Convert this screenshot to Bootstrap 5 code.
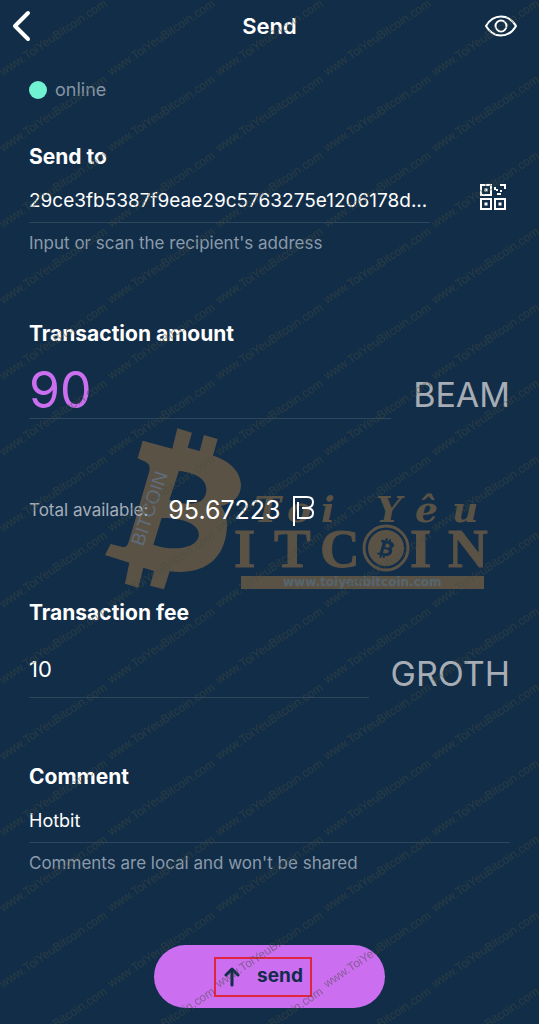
<!DOCTYPE html>
<html lang="en">
<head>
<meta charset="utf-8">
<meta name="viewport" content="width=device-width, initial-scale=1">
<title>Send</title>
<link href="https://cdn.jsdelivr.net/npm/bootstrap@5.3.0/dist/css/bootstrap.min.css" rel="stylesheet">
<style>
  body { background: #122d48; color: #fff; font-family: Inter, "Liberation Sans", sans-serif; }
  .screen { overflow: hidden; }
  .topbar { height: 52px; padding: 0 12px; grid-template-columns: 1fr auto 1fr; }
  .topbar h1 { font-size: 22px; line-height: 28px; font-weight: 600; }
  .icon-btn { background: none; border: 0; padding: 0; color: #fff; line-height: 0; }
  .eye-btn { justify-self: end; margin-right: 8px; }
  .content { padding: 26px 29px 15px; }
  .status { font-size: 18px; line-height: 24px; color: #8595a4; gap: 8px; margin-bottom: 41px; }
  .dot { width: 18px; height: 18px; background: #70f3d3; }
  .block { margin-bottom: 65px; }
  .title-label { display: block; font-size: 21px; line-height: 28px; font-weight: 700; }
  .field { background: none; border: 0; border-bottom: 1px solid #2d465b; border-radius: 0; color: #fff; padding: 0; min-width: 0; outline: 0; text-overflow: ellipsis; }
  .field-line { height: 44px; font-size: 18px; margin-top: 8px; }
  .field-address { font-size: 19px; }
  .field-tall { height: 57px; font-size: 22px; margin-top: 14px; }
  .field-amount { font-size: 50px; color: #cb6ff0; }
  .hint { font-size: 17px; line-height: 24px; color: #8b9bab; margin-top: 8px; }
  .unit { font-size: 34px; line-height: 40px; color: #a8adb5; padding-bottom: 4px; }
  .unit-row { gap: 22px; }
  .address-row { gap: 50px; padding-right: 4px; }
  .available { padding: 75px 0 73px; }
  .available-row { gap: 20px; line-height: 32px; }
  .available-label { font-size: 17px; color: #a5aeb8; }
  .available-value { font-size: 25px; gap: 11px; }
  .brand { left: 78px; top: 9px; width: 380px; overflow: visible; }
  .send-btn { width: 231px; height: 63px; background: #cb6ef0; color: #112c4c; border: 0; border-radius: 32px; }
  .send-frame { width: 98px; height: 40px; margin-right: 13px; border: 2px solid #e0263f; font-size: 19px; font-weight: 700; gap: 16px; }
  .tiled { inset: 0; pointer-events: none; z-index: 5; }
</style>
</head>
<body>
<div class="screen position-relative min-vh-100 d-flex flex-column">
  <header class="topbar d-grid align-items-center">
    <button type="button" class="icon-btn text-start" aria-label="Back">
      <svg width="22" height="34" viewBox="0 0 22 34" fill="none" stroke="currentColor" stroke-width="4" stroke-linecap="round" stroke-linejoin="round"><path d="M16 4 3 17l13 13"/></svg>
    </button>
    <h1 class="m-0">Send</h1>
    <button type="button" class="icon-btn eye-btn" aria-label="Hide amounts">
      <svg width="36" height="24" viewBox="0 0 36 24" fill="none" stroke="currentColor" stroke-width="2" stroke-linejoin="round"><path d="M3 12C7 5 12 2.500 18 2.500S29 5 33 12C29 19 24 21.500 18 21.500S7 19 3 12Z"/><circle cx="18" cy="12" r="5.500"/></svg>
    </button>
  </header>

  <main class="content flex-grow-1">
    <div class="status d-flex align-items-center"><span class="dot rounded-circle"></span>online</div>

    <section class="block">
      <label class="title-label" for="address">Send to</label>
      <div class="address-row d-flex align-items-center">
        <input id="address" class="field field-line field-address flex-grow-1" type="text" value="29ce3fb5387f9eae29c5763275e1206178d...">
        <button type="button" class="icon-btn" aria-label="Scan QR code">
          <svg width="26" height="26" viewBox="0 0 26 26"><g fill="none" stroke="#fff" stroke-width="2"><path d="M1 1h10v10H1zM1 15h10v10H1zM15 15h10v10H15z"/><path d="M20 1h5v4"/></g><path fill="#fff" d="M4.500 4.500h3v3h-3zM4.500 18.500h3v3h-3zM18.500 18.500h3v3h-3zM14 3h2v3h-2zM16 5h2v2h-2zM17 9h4v2h-4zM20 6h2v2h-2z"/></svg>
        </button>
      </div>
      <div class="hint">Input or scan the recipient's address</div>
    </section>

    <section>
      <label class="title-label" for="amount">Transaction amount</label>
      <div class="unit-row d-flex align-items-end">
        <input id="amount" class="field field-tall field-amount flex-grow-1" type="text" value="90">
        <span class="unit">BEAM</span>
      </div>
    </section>

    <section class="available position-relative">
      <svg class="brand position-absolute" height="162" viewBox="107 428 380 162" aria-hidden="true">
        <defs>
          <path id="coin-b" fill-rule="evenodd" d="M262 25 306 38 293 83 329 93 342 45 383 57 369 107C412 119 451 150 453 194C454 229 428 251 393 258C415 286 415 331 402 370C385 425 331 466 239 454L222 508 180 497 192 453 160 443 145 503 105 491 118 428 45 405 62 372 98 381C108 382 112 378 116 366L178 154C181 140 178 130 166 125L143 115 158 62 247 86ZM267 153 238 239C279 256 345 262 349 214C353 176 314 158 267 153ZM215 294 190 374C238 392 316 390 326 350C333 310 272 293 215 294Z"/>
        </defs>
        <g fill="#5b5246">
          <use href="#coin-b" transform="translate(90 420) scale(.3333)"/>
          <g font-family="Liberation Serif" font-weight="700" font-size="55" stroke="#5b5246"><text x="234" y="567">I</text><text x="274" y="567">T</text><text x="320" y="567">C</text><text x="410" y="567">I</text><text x="448" y="567">N</text></g>
          <g font-family="DejaVu Serif" font-weight="700" font-style="italic" font-size="36"><text x="254" y="522">T</text><text x="287" y="522">o</text><text x="321" y="522">i</text><text x="376" y="522">Y</text><text x="415" y="522">ê</text><text x="452" y="522">u</text></g>
          <path d="M241 576h243v13H241z"/>
          <circle cx="386" cy="548" r="18"/>
        </g>
        <circle cx="386" cy="548" r="22" fill="none" stroke="#5b5246" stroke-width="3"/>
        <use href="#coin-b" fill="#15304a" transform="translate(375 537) scale(.042)"/>
        <text transform="translate(143 547) rotate(-71)" font-family="Liberation Sans" font-size="19" fill="#5f6c7b">BITCOIN</text>
        <text x="283" y="586" font-family="DejaVu Sans" font-weight="700" font-size="12" fill="#56666f">www.toiyeubitcoin.com</text>
      </svg>
      <div class="available-row d-flex align-items-center position-relative">
        <span class="available-label">Total available:</span>
        <span class="available-value d-flex align-items-center">95.67223
          <svg width="23" height="32" viewBox="0 0 23 32" fill="none" stroke="#fff" stroke-width="2"><path d="M2 32V3H15C19 3 21 5 21 8C21 12 18 14 14 14H10M14 14C19 14 21 16 21 19C21 22 19 24 15 24H6V8"/></svg>
        </span>
      </div>
    </section>

    <section class="block">
      <label class="title-label" for="fee">Transaction fee</label>
      <div class="unit-row d-flex align-items-end">
        <input id="fee" class="field field-tall flex-grow-1" type="text" value="10">
        <span class="unit">GROTH</span>
      </div>
    </section>

    <section>
      <label class="title-label" for="comment">Comment</label>
      <input id="comment" class="field field-line w-100" type="text" value="Hotbit">
      <div class="hint">Comments are local and won't be shared</div>
    </section>
  </main>

  <footer class="d-flex justify-content-center pb-3">
    <button type="button" class="send-btn d-flex align-items-center justify-content-center p-0">
      <span class="send-frame d-flex align-items-center justify-content-center">
        <svg width="18" height="20" viewBox="0 0 18 20" fill="none" stroke="currentColor" stroke-width="3" stroke-linecap="round" stroke-linejoin="round"><path d="M9 18V3M3 8l6-6 6 6"/></svg>
        send
      </span>
    </button>
  </footer>

  <svg class="tiled position-absolute w-100 h-100" aria-hidden="true">
    <defs>
      <pattern id="tile" width="108" height="76" patternUnits="userSpaceOnUse">
        <g font-family="Liberation Sans" font-size="12" fill="#40493c" fill-opacity=".5">
          <text transform="translate(3 76) rotate(-34)">www.ToiYeuBitcoin.com</text>
          <text transform="translate(3 152) rotate(-34)">www.ToiYeuBitcoin.com</text>
          <text transform="translate(-105 76) rotate(-34)">www.ToiYeuBitcoin.com</text>
          <text transform="translate(-105 152) rotate(-34)">www.ToiYeuBitcoin.com</text>
        </g>
      </pattern>
    </defs>
    <rect width="100%" height="100%" fill="url(#tile)"/>
  </svg>
</div>
<script src="https://cdn.jsdelivr.net/npm/bootstrap@5.3.0/dist/js/bootstrap.bundle.min.js"></script>
</body>
</html>
